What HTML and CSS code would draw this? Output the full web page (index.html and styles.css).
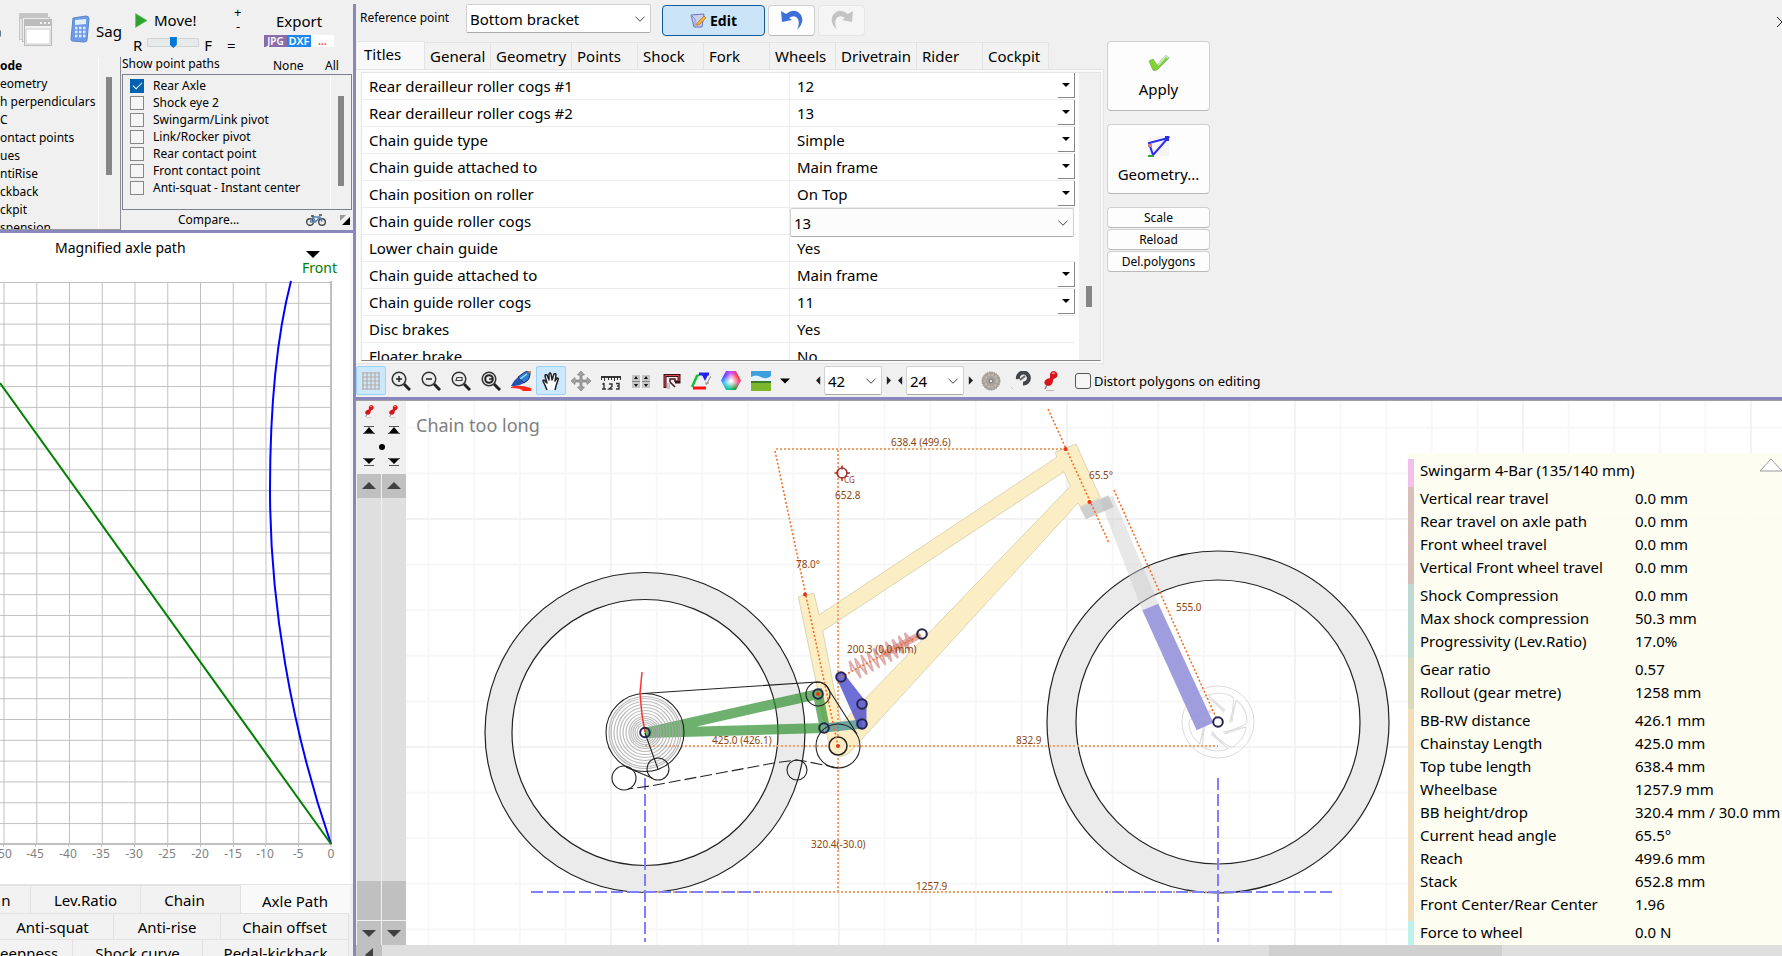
FILE: index.html
```html
<!DOCTYPE html>
<html lang="en">
<head>
<meta charset="utf-8">
<title>Bike suspension editor</title>
<link rel="stylesheet" href="styles.css">
</head>
<body>
<svg class="defs" aria-hidden="true">
  <defs>
    <symbol id="tri-down" viewBox="0 0 8 8"><path d="M0 2H8L4 6Z" fill="#000"/></symbol>
    <symbol id="tri-left" viewBox="0 0 6 10"><path d="M5 0V10L0 5Z" fill="#222"/></symbol>
    <symbol id="tri-right" viewBox="0 0 6 10"><path d="M1 0V10L6 5Z" fill="#222"/></symbol>
    <symbol id="chev" viewBox="0 0 10 6"><path d="M.5 .8L5 5.2L9.500 .8" fill="none" stroke="#444"/></symbol>
    <symbol id="pin" viewBox="0 0 20 20"><path d="M5 19.500H13" stroke="#bbb"/><path d="M7 12L4 18" stroke="#888" stroke-width="1.500"/><path d="M9 3Q10 0 13 0Q17 1 16.500 5Q15 8 12.500 8L11.500 12Q10 16 6 14.500Q2 13 4 9.500Q6 7 9 7Z" fill="#d8141c"/><path d="M11 2.500Q12 1.500 14 2.500" stroke="#f88" stroke-width="1.500" fill="none"/></symbol>
    <symbol id="lens" viewBox="0 0 20 20"><path d="M13 13L19 19" stroke="#222" stroke-width="3"/><circle cx="8" cy="8" r="6.800" fill="#ececec" stroke="#333" stroke-width="1.500"/></symbol>
    <symbol id="to-top" viewBox="0 0 12 8"><path d="M1 .5H11M0 7.500H12" stroke="#555"/><path d="M1 7L6 1L11 7Z" fill="#000"/></symbol>
    <symbol id="to-bottom" viewBox="0 0 12 8"><path d="M1 7.500H11M0 .5H12" stroke="#555"/><path d="M1 1L6 6L11 1Z" fill="#000"/></symbol>
  </defs>
</svg>
<div class="app">
  <aside class="left">
    <div class="motion">
      <svg class="ico-win" viewBox="0 0 54 36"><path d="M0 18l1 1v5l-1 1Z" fill="#678"/><rect x="19.500" y="1.500" width="28" height="26" fill="#e4e4e4" stroke="#c8c8c8"/><path d="M20 2h27v5H20Z" fill="#c4c4c4"/><rect x="22.500" y="5.500" width="27" height="24" fill="#eee" stroke="#c4c4c4"/><rect x="24.500" y="7.500" width="27" height="26" fill="#f2f2f2" stroke="#bbb"/><path d="M25 8h26v6H25Z" fill="#bcbcbc"/><path d="M40 11h2M44 11h2M48 11h2" stroke="#f4f4f4" stroke-width="2"/><path d="M26 17h24v15H26Z" fill="#fff" stroke="#ccc"/></svg>
      <button class="sag" type="button"><svg viewBox="0 0 20 28" width="20" height="28"><path d="M3 3L16 1Q19 1 19 4L17 25Q17 27 14 27L2 26Q1 26 1 24Z" fill="#6f9be6" stroke="#5b86c8"/><path d="M5 5L16 4L16 9L5 10Z" fill="#dff0ff"/><path d="M5 13h2.500m1.500 0h2.500m1.500 0h2.500M5 17h2.500m1.500 0h2.500m1.500 0h2.500M5 21h2.500m1.500 0h2.500m1.500 0h2.500" stroke="#dceaff" stroke-width="2.500"/></svg><span>Sag</span></button>
      <div class="move">
        <button class="plain" type="button"><svg viewBox="0 0 12 15" width="12" height="15"><path d="M.5 .5L12 7.500L.5 14.500Z" fill="#2fa32f" stroke="#5cc05c" stroke-width=".6"/></svg><span>Move!</span></button>
        <div class="range"><label for="mv">R</label><input id="mv" type="range" min="0" max="100" value="50"><span>F</span></div>
      </div>
      <div class="steps"><button class="plain" type="button">+</button><button class="plain" type="button">-</button><button class="plain eq" type="button">=</button></div>
      <div class="export"><span>Export</span><div class="formats"><button type="button" class="jpg">JPG</button><button type="button" class="dxf">DXF</button><button type="button" class="etc">...</button></div></div>
    </div>
    <div class="options">
      <div class="modes">
        <ul>
          <li class="b">ode</li><li>eometry</li><li>h perpendiculars</li><li>C</li><li>ontact points</li><li>ues</li><li>ntiRise</li><li>ckback</li><li>ckpit</li><li>spension</li>
        </ul>
        <div class="thin-scroll"><i></i></div>
      </div>
      <div class="paths">
        <div class="paths-head"><span>Show point paths</span><button class="plain none" type="button">None</button><button class="plain" type="button">All</button></div>
        <div class="listbox">
          <div class="checks">
            <label><input type="checkbox" checked>Rear Axle</label>
            <label><input type="checkbox">Shock eye 2</label>
            <label><input type="checkbox">Swingarm/Link pivot</label>
            <label><input type="checkbox">Link/Rocker pivot</label>
            <label><input type="checkbox">Rear contact point</label>
            <label><input type="checkbox">Front contact point</label>
            <label><input type="checkbox">Anti-squat - Instant center</label>
          </div>
          <div class="thin-scroll list"><i></i></div>
        </div>
        <div class="paths-foot"><button class="plain" type="button">Compare...</button>
          <svg class="bike" viewBox="0 0 20 12"><g fill="none" stroke="#444" stroke-width="1.400"><circle cx="4" cy="8" r="3.300"/><circle cx="16" cy="8" r="3.300"/><path d="M4 8L7 3L14 3L16 8M7 3L9.500 8L14 3M4 8H9.500" stroke="#5b83b8"/><path d="M5 2h3M13 1h3"/></g></svg>
          <svg class="corner" viewBox="0 0 10 10"><path d="M0 0H6L0 6Z" fill="#999"/><path d="M10 2V10H2Z" fill="#000"/></svg></div>
      </div>
    </div>
    <div class="chart">
      <svg viewBox="0 233 350 651" preserveAspectRatio="xMaxYMin meet">
        <defs><pattern id="cg" x="331" y="282" width="32.750" height="20.810" patternUnits="userSpaceOnUse"><path d="M.5 0V20.810M0 .5H32.750" stroke="#c0c0c0" fill="none"/></pattern></defs>
        <rect x="0" y="282" width="331" height="562" fill="url(#cg)"/>
        <path d="M331 281V845M0 844H331" stroke="#c0c0c0" stroke-width="2"/>
        <path d="M3.500 844v3M35.500 844v3M68.500 844v3M101.500 844v3M134.500 844v3M167.500 844v3M200.500 844v3M233.500 844v3M265.500 844v3M298.500 844v3M331 844v3" stroke="#c0c0c0"/>
        <path d="M291 281C277 335 270 410 270 490C270 600 290 725 331 844" fill="none" stroke="#00f" stroke-width="2"/>
        <path d="M0 383L331 844" stroke="#008000" stroke-width="2"/>
        <path d="M306 251H320L313 258Z" fill="#000"/>
        <text class="c-title" x="55" y="253">Magnified axle path</text>
        <text class="c-front" x="302" y="273">Front</text>
        <g class="c-axis"><text x="3" y="858">-50</text><text x="35" y="858">-45</text><text x="68" y="858">-40</text><text x="101" y="858">-35</text><text x="134" y="858">-30</text><text x="167" y="858">-25</text><text x="200" y="858">-20</text><text x="233" y="858">-15</text><text x="265" y="858">-10</text><text x="298" y="858">-5</text><text x="331" y="858">0</text></g>
      </svg>
    </div>
    <div class="ctabs" role="tablist">
      <div class="crow r1"><button role="tab">n</button><button role="tab">Lev.Ratio</button><button role="tab">Chain</button><button role="tab" class="on" aria-selected="true">Axle Path</button></div>
      <div class="crow r2"><button role="tab">Anti-squat</button><button role="tab">Anti-rise</button><button role="tab">Chain offset</button></div>
      <div class="crow r3"><button role="tab">eepness</button><button role="tab">Shock curve</button><button role="tab">Pedal-kickback</button></div>
    </div>
  </aside>
  <div class="vsplit"></div>
  <main class="right">
    <section class="editor">
      <div class="editor-main">
        <div class="refrow">
          <label for="ref">Reference point</label>
          <span class="combo ref"><select id="ref"><option>Bottom bracket</option></select><svg><use href="#chev"/></svg></span>
          <button class="edit" type="button"><svg viewBox="0 0 17 15" width="17" height="15"><path d="M1 2L14 1L12 14L4 14Z" fill="#c9cff0" stroke="#6a72b8"/><path d="M1 2L5 6L5 13" fill="none" stroke="#8a90cc"/><path d="M7 10L14 3L16 5L9 12L6 12Z" fill="#f4b43c" stroke="#a87420" stroke-width=".7"/></svg>Edit</button>
          <button class="ur" type="button" aria-label="Undo"><svg viewBox="0 0 22 21"><path d="M0 1L1 12L11 10L8 8Q14 4 17 9Q19 14 16 20Q24 12 20 5Q14 -3 5 4Z" fill="#3c6fd8"/></svg></button>
          <button class="ur off" type="button" aria-label="Redo" disabled><svg viewBox="0 0 22 21"><path d="M22 1L21 12L11 10L14 8Q8 4 5 9Q3 14 6 20Q-2 12 2 5Q8 -3 17 4Z" fill="#c4c4c4"/></svg></button>
        </div>
        <div class="tabs" role="tablist">
          <button role="tab" class="on" aria-selected="true">Titles</button><button role="tab">General</button><button role="tab" class="w">Geometry</button><button role="tab">Points</button><button role="tab">Shock</button><button role="tab">Fork</button><button role="tab">Wheels</button><button role="tab" class="w">Drivetrain</button><button role="tab">Rider</button><button role="tab">Cockpit</button>
        </div>
        <div class="sheet">
          <div class="sheet-in">
            <table>
              <colgroup><col class="k"><col></colgroup>
              <tr><th scope="row"><label for="p1">Rear derailleur roller cogs #1</label></th><td><span class="cell"><select id="p1"><option>12</option></select><i><svg><use href="#tri-down"/></svg></i></span></td></tr>
              <tr><th scope="row"><label for="p2">Rear derailleur roller cogs #2</label></th><td><span class="cell"><select id="p2"><option>13</option></select><i><svg><use href="#tri-down"/></svg></i></span></td></tr>
              <tr><th scope="row"><label for="p3">Chain guide type</label></th><td><span class="cell"><select id="p3"><option>Simple</option></select><i><svg><use href="#tri-down"/></svg></i></span></td></tr>
              <tr><th scope="row"><label for="p4">Chain guide attached to</label></th><td><span class="cell"><select id="p4"><option>Main frame</option></select><i><svg><use href="#tri-down"/></svg></i></span></td></tr>
              <tr><th scope="row"><label for="p5">Chain position on roller</label></th><td><span class="cell"><select id="p5"><option>On Top</option></select><i><svg><use href="#tri-down"/></svg></i></span></td></tr>
              <tr><th scope="row"><label for="p6">Chain guide roller cogs</label></th><td><span class="combo active"><select id="p6"><option>13</option></select><svg><use href="#chev"/></svg></span></td></tr>
              <tr><th scope="row">Lower chain guide</th><td class="t">Yes</td></tr>
              <tr><th scope="row"><label for="p8">Chain guide attached to</label></th><td><span class="cell"><select id="p8"><option>Main frame</option></select><i><svg><use href="#tri-down"/></svg></i></span></td></tr>
              <tr><th scope="row"><label for="p9">Chain guide roller cogs</label></th><td><span class="cell"><select id="p9"><option>11</option></select><i><svg><use href="#tri-down"/></svg></i></span></td></tr>
              <tr><th scope="row">Disc brakes</th><td class="t">Yes</td></tr>
              <tr><th scope="row">Floater brake</th><td class="t">No</td></tr>
            </table>
            <div class="sheet-scroll"><i></i></div>
          </div>
        </div>
      </div>
      <div class="actions">
        <button class="big" type="button"><svg viewBox="0 0 22 18" width="22" height="18"><path d="M1 7L5 5L9 11L18 1L21 4L10 15Q7 18 5 16Z" fill="#7fd62a" stroke="#7aa86a" stroke-width=".8"/><path d="M10 11L18 2L20 4" fill="none" stroke="#c8e6c0" stroke-width="2"/></svg>Apply</button>
        <button class="big" type="button"><svg viewBox="0 0 22 22" width="22" height="22"><path d="M1 1H21V21H1Z" fill="#f6f4f4"/><path d="M1 8L20 3L5 20Z" fill="none" stroke="#2c2cf0" stroke-width="2"/><path d="M17 1h4v5h-4Z" fill="#2c2ce0"/><path d="M0 9v3h4v-3Z" fill="#c88"/><path d="M0 21h6" stroke="#3a3" stroke-width="2"/></svg>Geometry...</button>
        <button class="small" type="button">Scale</button>
        <button class="small" type="button">Reload</button>
        <button class="small" type="button">Del.polygons</button>
      </div>
      <svg class="close" viewBox="0 0 5 12"><path d="M10 1L0 11M0 1L10 11" stroke="#222" fill="none"/></svg>
    </section>
    <div class="toolbar">
      <button class="tb on" aria-label="Grid"><svg viewBox="0 0 20 20"><path d="M2 1V19M6 1V19M10 1V19M14 1V19M18 1V19M1 2H19M1 6H19M1 10H19M1 14H19M1 18H19" stroke="#b6aca6" stroke-width="1.200"/></svg></button>
      <button class="tb" aria-label="Zoom in"><svg viewBox="0 0 20 20"><use href="#lens"/><path d="M5 8h6M8 5v6" stroke="#222" stroke-width="1.500"/></svg></button>
      <button class="tb" aria-label="Zoom out"><svg viewBox="0 0 20 20"><use href="#lens"/><path d="M5 8h6" stroke="#222" stroke-width="1.500"/></svg></button>
      <button class="tb" aria-label="Zoom window"><svg viewBox="0 0 20 20"><use href="#lens"/><path d="M5 9.500L6 6.500H11V9.500Z" fill="none" stroke="#444" stroke-width="1.200"/></svg></button>
      <button class="tb" aria-label="Zoom all"><svg viewBox="0 0 20 20"><use href="#lens"/><circle cx="8" cy="8" r="3.800" fill="none" stroke="#222" stroke-width="2"/><path d="M8 8h4" stroke="#222" stroke-width="1.500"/></svg></button>
      <button class="tb" aria-label="Brush"><svg viewBox="0 0 20 20"><path d="M0 15Q3 9 7 6L13 12Q7 16 0 15Z" fill="#2454b0"/><path d="M7 6L14 1Q19 -1 19 4Q19 9 13 12Z" fill="#2f7fd4" stroke="#1a2a60"/><path d="M9 8L16 3" stroke="#9fe0ff" stroke-width="1.500"/><path d="M16 0L20 0L20 3Z" fill="#c84"/><path d="M0 16Q8 13 20 17V20H12Q10 17 0 17Z" fill="#ff2a1a"/></svg></button>
      <button class="tb on" aria-label="Pan"><svg viewBox="0 0 20 20"><path d="M6 19L3 12Q1 9 3 9L6 12L4 5Q4 3 6 4L8 9L8 3Q9 1 10 3L11 9L13 3Q15 2 15 4L14 10L16 7Q18 7 17 9L15 15L14 19" fill="#fff" stroke="#222" stroke-width="1.500" stroke-linejoin="round"/></svg></button>
      <button class="tb" aria-label="Move"><svg viewBox="0 0 20 20"><path d="M10 0L13.500 4H11V9H16V6.500L20 10L16 13.500V11H11V16H13.500L10 20L6.500 16H9V11H4V13.500L0 10L4 6.500V9H9V4H6.500Z" fill="#a4a4a4" stroke="#777" stroke-width=".7"/></svg></button>
      <button class="tb" aria-label="Ruler"><svg viewBox="0 0 20 20"><path d="M0 5h20v4h-1V7h-2v2h-1V7h-2v3h-1V7h-2v2h-1V7H8v2H7V7H4v3H3V7H1v2H0Z" fill="#333"/><path d="M3 12v6M1 18h4M1.500 13.500L3 12M8 13h3v2.500L8 18h3.500M15 12.500h3v2.500h-2M18 15v3h-3" fill="none" stroke="#333" stroke-width="1.400"/></svg></button>
      <button class="tb" aria-label="Fields"><svg viewBox="0 0 20 20"><path d="M1 4h8v13H1ZM11 4h8v13h-8Z" fill="#c6c6c6"/><path d="M1 10.500h8M11 10.500h8" stroke="#888"/><path d="M3 8L5 5L7 8ZM3 13L5 16L7 13ZM13 8L15 5L17 8ZM13 13L15 16L17 13Z" fill="#111"/></svg></button>
      <button class="tb" aria-label="Outline"><svg viewBox="0 0 20 20"><path d="M4 17V4.500H18V11H14" fill="none" stroke="#401018" stroke-width="3"/><path d="M4 16V4.500H18V10" fill="none" stroke="#e04a50" stroke-width="1"/><path d="M9 11V8H14V11M9 11L14 16" fill="none" stroke="#501018" stroke-width="1.500"/><path d="M6 12h3v6H6Z" fill="#c4c4c4"/></svg></button>
      <button class="tb" aria-label="Polygon"><svg viewBox="0 0 20 20"><path d="M1 16L6 5L8 4" fill="none" stroke="#10c030" stroke-width="2.500"/><path d="M8 3H18" stroke="#22e" stroke-width="3"/><path d="M11 4H17L14 10Z" fill="#22e"/><path d="M2 17H15" stroke="#f11" stroke-width="3"/><path d="M15 14L20 5M14 12h4" stroke="#888"/></svg></button>
      <button class="tb" aria-label="Colours"><span class="wheel"></span></button>
      <button class="tb" aria-label="Background picture"><svg viewBox="0 0 20 20"><path d="M0 0H20V11H0Z" fill="#3f9fdc"/><path d="M0 6Q5 3 10 6T20 5V11H0Z" fill="#e4f3fb"/><path d="M0 10H20V13H0Z" fill="#3c7a2c"/><path d="M0 12H20V20H0Z" fill="#7db82c"/></svg></button>
      <button class="tb narrow" aria-label="Background options"><svg class="s8"><use href="#tri-down"/></svg></button>
      <button class="tb arr" aria-label="Previous chainring"><svg class="s6"><use href="#tri-left"/></svg></button>
      <span class="combo gear"><select aria-label="Chainring"><option>42</option></select><svg><use href="#chev"/></svg></span>
      <button class="tb arr" aria-label="Next chainring"><svg class="s6"><use href="#tri-right"/></svg></button>
      <button class="tb arr" aria-label="Previous cog"><svg class="s6"><use href="#tri-left"/></svg></button>
      <span class="combo gear"><select aria-label="Cog"><option>24</option></select><svg><use href="#chev"/></svg></span>
      <button class="tb arr" aria-label="Next cog"><svg class="s6"><use href="#tri-right"/></svg></button>
      <button class="tb" aria-label="Cassette"><svg viewBox="0 0 20 20"><circle cx="10" cy="10" r="9" fill="#aaa39a" stroke="#8d8880" stroke-dasharray="1.500 1"/><circle cx="10" cy="10" r="6" fill="none" stroke="#c0bab2" stroke-dasharray="2 1.500" stroke-width="2"/><circle cx="10" cy="10" r="2.500" fill="#888"/><circle cx="10" cy="10" r="1" fill="#fff"/></svg></button>
      <button class="tb" aria-label="Chain"><svg viewBox="0 0 20 20"><path d="M7 8A5.500 5.500 0 1 1 12 12.500" fill="none" stroke="#42464a" stroke-width="4"/><path d="M9 9l5-4" stroke="#666" stroke-width="2"/><path d="M0 16l3 3" stroke="#bbb" stroke-dasharray="1 1"/></svg></button>
      <button class="tb" aria-label="Pin view"><svg><use href="#pin"/></svg></button>
      <label class="distort"><input type="checkbox">Distort polygons on editing</label>
    </div>
    <section class="view">
      <div class="rails">
        <div class="rails-head">
          <svg><use href="#pin"/></svg><svg><use href="#pin"/></svg>
          <svg class="flat"><use href="#to-top"/></svg><svg class="flat"><use href="#to-top"/></svg>
          <b></b>
          <svg class="flat"><use href="#to-bottom"/></svg><svg class="flat"><use href="#to-bottom"/></svg>
        </div>
        <div class="rail-pair">
          <div class="rail"><button aria-label="Up"><svg viewBox="0 0 14 8"><path d="M0 7L7 0L14 7Z" fill="#404040"/></svg></button><span></span><i></i><button aria-label="Down"><svg viewBox="0 0 14 8"><path d="M0 1L7 8L14 1Z" fill="#404040"/></svg></button></div>
          <div class="rail"><button aria-label="Up"><svg viewBox="0 0 14 8"><path d="M0 7L7 0L14 7Z" fill="#404040"/></svg></button><span></span><i></i><button aria-label="Down"><svg viewBox="0 0 14 8"><path d="M0 1L7 8L14 1Z" fill="#404040"/></svg></button></div>
        </div>
      </div>
      <div class="stage">
        <svg class="scene" viewBox="406 401 1376 544" preserveAspectRatio="xMinYMin slice">
          <defs>
            <pattern id="minor" x="610" y="518" width="45.600" height="45.600" patternUnits="userSpaceOnUse"><path d="M1 0V45.600M0 1H45.600" stroke="#f7f7f7" stroke-width="2"/></pattern>
            <pattern id="major" x="610" y="518" width="228" height="228" patternUnits="userSpaceOnUse"><path d="M1 0V228M0 1H228" stroke="#f2f2f2" stroke-width="2"/></pattern>
            <g id="win"><path d="M5 10L28 5Q27 17 15 25Q12 26 9 23L-7 11M7 12L27 5"/></g>
          </defs>
          <rect x="406" y="400" width="1376" height="545" fill="url(#minor)"/>
          <rect x="406" y="400" width="1376" height="545" fill="url(#major)"/>
          <g fill="none">
            <circle cx="645" cy="732.500" r="146.500" stroke="#ebebeb" stroke-width="27"/>
            <circle cx="1218" cy="722" r="156.500" stroke="#ebebeb" stroke-width="29"/>
            <g stroke="#222" stroke-width="1.200"><circle cx="645" cy="732.500" r="160"/><circle cx="645" cy="732.500" r="133"/><circle cx="1218" cy="722" r="171"/><circle cx="1218" cy="722" r="142"/></g>
            <g stroke="#dcdcdc" transform="translate(1218 722)"><circle r="36"/><use href="#win"/><use href="#win" transform="rotate(60)"/><use href="#win" transform="rotate(120)"/><use href="#win" transform="rotate(180)"/><use href="#win" transform="rotate(240)"/><use href="#win" transform="rotate(300)"/></g>
          </g>
          <path d="M1100 500L1113 496L1158.300 603.700L1142.300 610.300Z" fill="#c8c8c8" fill-opacity=".42"/>
          <path d="M1079.700 507.300L1108.300 495.300L1113.700 507L1086 519.300Z" fill="#bbb" fill-opacity=".7"/>
          <path d="M1142.300 610.300L1158.300 603.700L1213.300 722.700L1196.700 730.300Z" fill="#9795da" fill-opacity=".92"/>
          <path fill-rule="evenodd" d="M798.300 596.700L814 593.300L819 615L1056.700 457.300L1055.300 452.300L1076 444L1100.300 497.700L1080 506.700L1078 503L851 751Q846 757 838 756Q830 755 829 744ZM822.700 631L841 724L1070.300 486.300L1064 471.700Z" fill="#fbeec5" stroke="#ddd5b4"/>
          <g stroke="#f4a26c" stroke-width="2" stroke-dasharray="2 2" fill="none"><path d="M645 746H1218M838 450V892M776 449H1065M645 892H1218"/></g>
          <g stroke="#8080ff" stroke-width="2" stroke-dasharray="12 4" fill="none"><path d="M531 892H760M1332 892H1105M645 778V942M1218 778V942"/></g>
          <g stroke="#2a8c2a" stroke-opacity=".68" stroke-width="10" fill="none"><path d="M824 728L645 733L818 694L824 724"/></g>
          <path d="M824 728L862 724" stroke="#3c8c90" stroke-opacity=".75" stroke-width="9"/>
          <path d="M841 677L862 704V724Z" fill="#4a4ace" stroke="#4a4ace" stroke-width="9" stroke-linejoin="round" opacity=".8"/>
          <g transform="translate(841 677) rotate(-28)" fill="none"><path d="M12 0L15 -10L17 10L21 -10L24 10L28 -10L31 10L35 -10L38 10L42 -10L45 10L49 -10L52 10L56 -10L59 10L63 -9L66 9L70 -9L73 9L77 -9L80 3" stroke="#d08a88" stroke-opacity=".7" stroke-width="2"/><path d="M48 0H90" stroke="#cc7a76" stroke-opacity=".6" stroke-width="7"/></g>
          <g fill="none" stroke="#aaa" stroke-opacity=".8" stroke-width="1.200"><circle cx="645" cy="732.500" r="8"/><circle cx="645" cy="732.500" r="10"/><circle cx="645" cy="732.500" r="12"/><circle cx="645" cy="732.500" r="14"/><circle cx="645" cy="732.500" r="16"/><circle cx="645" cy="732.500" r="19"/><circle cx="645" cy="732.500" r="22"/><circle cx="645" cy="732.500" r="25"/><circle cx="645" cy="732.500" r="28"/><circle cx="645" cy="732.500" r="31"/><circle cx="645" cy="732.500" r="34"/><circle cx="645" cy="732.500" r="36"/></g>
          <g fill="none" stroke="#222" stroke-width="1.100"><circle cx="645" cy="732.500" r="39"/><path d="M643 693.500L817 682Q825 682 829 690L857 734"/><circle cx="818" cy="694" r="12"/><circle cx="838" cy="746" r="22"/><circle cx="838" cy="746" r="9" fill="#fbeec5" stroke-width="1.500"/><circle cx="797" cy="770" r="10"/><circle cx="658" cy="769" r="11"/><circle cx="624" cy="778" r="12"/><path d="M645 733L658 769M626 767L652 778"/><path d="M838 768L804 761L796 760L774 763L650 786L628 789" stroke-dasharray="12 4"/></g>
          <g stroke="#f36a1c" stroke-width="1.500" stroke-dasharray="2 2"><path d="M775 451L838 746M1048 409L1109 543M1114 490L1218 722M841 677L922 634"/></g>
          <path d="M642 672L640 693L642 715L645 732" fill="none" stroke="#f33" stroke-width="1.500"/>
          <g stroke="#24244c" stroke-width="2" fill="none"><circle cx="645" cy="732.500" r="4.800"/><circle cx="818" cy="694" r="4.800"/><circle cx="824" cy="728" r="4.800"/><circle cx="862" cy="724" r="4.800"/><circle cx="862" cy="704" r="4.800"/><circle cx="841" cy="677" r="4.800"/><circle cx="922" cy="634" r="4.800"/><circle cx="1218" cy="722" r="4.800" fill="#fff"/></g>
          <g fill="#f03010"><circle cx="1065.500" cy="449" r="2"/><circle cx="1089.500" cy="502" r="2"/><circle cx="805" cy="594.500" r="2"/><circle cx="838" cy="746" r="2"/><circle cx="818" cy="694" r="2"/></g>
          <g fill="none" stroke="#a03030" stroke-width="1.500"><circle cx="842" cy="473" r="5"/><path d="M842 465.500v4M842 477v4M834.500 473h4M846 473h4"/></g>
          <g class="dims"><text x="891" y="446">638.4 (499.6)</text><text x="1089" y="479">65.5°</text><text x="835" y="499">652.8</text><text x="796" y="568">78.0°</text><text x="847" y="653">200.3 (0.0 mm)</text><text x="712" y="744">425.0 (426.1)</text><text x="1016" y="744">832.9</text><text x="1176" y="611">555.0</text><text x="811" y="848">320.4(-30.0)</text><text x="916" y="890">1257.9</text></g>
          <text class="cg" x="844" y="483">CG</text>
        </svg>
        <div class="warn">Chain too long</div>
        <div class="info">
          <svg class="fold" viewBox="0 0 24 14"><path d="M1 13L12 1L23 13Z" fill="#fff" stroke="#999"/></svg>
          <dl class="g1"><div><dt>Swingarm 4-Bar (135/140 mm)</dt></div></dl>
          <dl class="g2"><div><dt>Vertical rear travel</dt><dd>0.0 mm</dd></div><div><dt>Rear travel on axle path</dt><dd>0.0 mm</dd></div><div><dt>Front wheel travel</dt><dd>0.0 mm</dd></div><div><dt>Vertical Front wheel travel</dt><dd>0.0 mm</dd></div></dl>
          <dl class="g3"><div><dt>Shock Compression</dt><dd>0.0 mm</dd></div><div><dt>Max shock compression</dt><dd>50.3 mm</dd></div><div><dt>Progressivity (Lev.Ratio)</dt><dd>17.0%</dd></div></dl>
          <dl class="g4"><div><dt>Gear ratio</dt><dd>0.57</dd></div><div><dt>Rollout (gear metre)</dt><dd>1258 mm</dd></div></dl>
          <dl class="g5"><div><dt>BB-RW distance</dt><dd>426.1 mm</dd></div><div><dt>Chainstay Length</dt><dd>425.0 mm</dd></div><div><dt>Top tube length</dt><dd>638.4 mm</dd></div><div><dt>Wheelbase</dt><dd>1257.9 mm</dd></div><div><dt>BB height/drop</dt><dd>320.4 mm / 30.0 mm</dd></div><div><dt>Current head angle</dt><dd>65.5°</dd></div><div><dt>Reach</dt><dd>499.6 mm</dd></div><div><dt>Stack</dt><dd>652.8 mm</dd></div><div><dt>Front Center/Rear Center</dt><dd>1.96</dd></div></dl>
          <dl class="g6"><div><dt>Force to wheel</dt><dd>0.0 N</dd></div></dl>
        </div>
      </div>
    </section>
    <div class="hscroll"><button aria-label="Scroll left"><svg viewBox="0 0 8 14"><path d="M8 0V14L0 7Z" fill="#404040"/></svg></button><span></span><i></i><span class="after"></span></div>
  </main>
</div>
</body>
</html>
```
FILE: styles.css
```css
* { box-sizing: border-box; }
body { margin: 0; font-family: "Noto Sans", "Open Sans", sans-serif; font-size: 15px; line-height: 20px; color: #000; background: #f0f0f0; }
button, select, input { font: inherit; color: inherit; margin: 0; }
button { padding: 0; border: 0; background: none; white-space: nowrap; }
svg { display: block; flex: none; }
i, b { display: block; }
ul, dl, dd { margin: 0; padding: 0; list-style: none; }
.defs { position: absolute; width: 0; height: 0; }
.app { display: flex; height: 100vh; overflow: hidden; }
.left { flex: 0 0 353px; display: flex; flex-direction: column; min-height: 0; overflow: hidden; }
.vsplit { flex: 0 0 3px; margin-top: 4px; background: #8987bb; }
.right { flex: 1; min-width: 0; display: flex; flex-direction: column; }
.plain { display: flex; align-items: center; }

/* Motion controls */
.motion { display: flex; flex: 0 0 57px; min-height: 0; }
.ico-win { width: 54px; height: 36px; margin-top: 12px; }
.sag { display: flex; gap: 6px; height: 28px; margin: 15px 0 0 16px; width: 63px; align-items: center; }
.sag span { padding-top: 4px; }
.move { width: 88px; padding-top: 10px; }
.move .plain { gap: 7px; padding-left: 2px; }
.range { display: flex; align-items: center; gap: 5px; height: 30px; }
.range input { appearance: none; width: 52px; height: 9px; background: #e7eaea; border: 1px solid #d2d4d4; margin-top: -6px; }
.range input::-webkit-slider-thumb { appearance: none; width: 7px; height: 11px; background: #0078d7; clip-path: polygon(0 0, 100% 0, 100% 70%, 50% 100%, 0 70%); margin-top: 1px; }
.steps { display: flex; flex-direction: column; width: 36px; padding: 5px 0 0 12px; font-size: 13px; }
.steps .plain { height: 14px; padding-left: 1px; line-height: 14px; }
.steps .plain + .plain { padding-left: 3px; }
.steps .plain.eq { height: 24px; margin-left: -9px; font-size: 15px; }
.export { padding: 11px 0 0 7px; }
.export > span { padding-left: 12px; }
.formats { display: flex; margin-top: 4px; }
.formats button { width: 23px; height: 12px; line-height: 12px; font-size: 10px; font-weight: 600; color: #fff; }
.formats .jpg { background: #8a6cab; }
.formats .dxf { background: #1b86f0; width: 24px; font-size: 11px; }
.formats .etc { background: #fff; color: #e33; }

/* Option lists */
.options { display: flex; flex: 0 0 176px; min-height: 0; overflow: hidden; font-size: 12px; border-bottom: 3px solid #8987bb; }
.modes { display: flex; flex: 0 0 121px; border-right: 1px solid #8b8b93; border-bottom: 1px solid #999; overflow: hidden; }
.modes ul { width: 98px; line-height: 18px; white-space: nowrap; font-size: 12px; }
.modes .b { font-weight: 700; }
.thin-scroll { border-left: 1px solid #fff; padding: 20px 0 0 7px; }
.thin-scroll i { width: 6px; height: 98px; background: #868686; }
.paths { flex: 1; min-width: 0; padding-left: 1px; }
.paths-head { display: flex; height: 17px; align-items: center; line-height: 16px; }
.paths-head span { width: 151px; margin-top: -4px; }
.paths-head .none { width: 52px; }
.listbox { display: flex; height: 136px; border: 1px solid #7c808c; margin-right: 1px; }
.checks { width: 207px; padding: 2px 0 0 7px; }
.checks label { display: flex; align-items: center; gap: 9px; height: 17px; }
.checks input, .distort input { appearance: none; width: 14px; height: 14px; border: 1px solid #888; background: #f5f5f5; }
.checks input:checked { border-color: #0063b1; background: #0063b1; display: grid; place-items: center; }
.checks input:checked::after { content: ""; width: 8px; height: 4px; border: solid #fff; border-width: 0 0 1px 1px; rotate: -45deg; translate: 0 -1px; }
.thin-scroll.list { padding-top: 21px; }
.thin-scroll.list i { height: 90px; }
.paths-foot { display: flex; align-items: center; height: 20px; padding-left: 56px; }
.paths-foot button { width: 128px; }
.bike { width: 20px; height: 12px; }
.corner { width: 10px; height: 10px; margin-left: 14px; }

/* Chart */
.chart { flex: 1; min-height: 0; background: #fff; border: solid #f8f8f8; border-width: 0 3px 0 0; }
.chart svg { width: 100%; height: 100%; }
.c-title { font-size: 14px; }
.c-front { font-size: 14px; fill: #008000; }
.c-axis { font-size: 12px; fill: #808080; text-anchor: middle; }
.ctabs { flex: 0 0 72px; min-height: 0; overflow: hidden; background: #f0f0f0; font-size: 15px; border-top: 1px solid #e4e4e4; }
.crow { display: grid; height: 26px; margin-right: 4px; }
.crow.r1 { height: 28px; margin-right: 3px; }
.r1 { grid-template-columns: 31px 110px 100px 1fr; }
.r2 { grid-template-columns: 114px 107px 1fr; }
.r3 { grid-template-columns: 73px 130px 1fr; }
.crow button { background: #f2f2f2; border: solid #e2e2e2; border-width: 1px 1px 0 0; text-align: center; }
.r1 button:first-child { padding-right: 18px; }
.r1 button:nth-child(3) { padding-right: 12px; }
.r2 button:first-child { padding-right: 8px; }
.r3 button:first-child { padding-right: 20px; }
.crow .on { background: #f9f9f9; border-color: #f9f9f9; padding-top: 2px; }

/* Editor */
.editor { display: flex; flex: 0 0 364px; min-height: 0; position: relative; }
.editor-main { flex: 0 0 748px; display: flex; flex-direction: column; }
.refrow { display: flex; height: 41px; padding: 4px 0 0 4px; font-size: 13px; }
.refrow label { width: 106px; padding-top: 4px; font-size: 12px; }
.combo { display: grid; align-items: center; height: 29px; border: 1px solid #d0d0d0; border-bottom-color: #aaa; border-radius: 2px; background: #fff; }
.combo > * { grid-area: 1 / 1; }
.combo select { appearance: none; border: 0; background: none; width: 100%; height: 100%; padding: 0 0 0 3px; font-size: 15px; }
.combo svg { width: 10px; height: 6px; justify-self: end; margin-right: 5px; pointer-events: none; }
.combo.ref { width: 185px; }
.combo.active { height: 29px; margin: 0 0 -3px 0; width: 284px; position: relative; background: #fcfcfc; }
.edit { display: flex; align-items: center; justify-content: center; gap: 3px; width: 103px; height: 31px; margin: 1px 3px 0 11px; border: 1px solid #0a5a9c; border-radius: 4px; background: #cce4f7; font-weight: 700; font-size: 14px; }
.ur { display: grid; place-items: center; width: 47px; height: 31px; margin: 1px 3px 0 0; border: 1px solid #d0d0d0; border-bottom-color: #bbb; border-radius: 4px; background: #fdfdfd; }
.ur svg { width: 22px; height: 21px; }
.ur.off { background: #f5f5f5; border-color: #e6e6e6; }
.tabs { display: flex; align-items: flex-end; height: 28px; padding-left: 1px; }
.tabs button { width: 66px; height: 27px; padding-left: 5px; text-align: left; background: #f2f2f2; border: solid #e4e4e4; border-width: 1px 1px 0 0; }
.tabs .w { width: 81px; }
.tabs .on { height: 28px; width: 68px; background: #f9f9f9; padding: 0 0 4px 7px; }
.sheet { flex: 1; background: #f9f9f9; padding: 2px 2px 2px 5px; border: 1px solid #e4e4e4; border-left: 0; min-height: 0; }
.sheet-in { display: flex; height: 289px; overflow: hidden; border: 1px solid #e4e4e4; border-bottom-color: #888; background: #fff; }
table { width: 713px; border-collapse: separate; border-spacing: 0; table-layout: fixed; align-self: flex-start; }
.k { width: 428px; }
th, td { padding: 0; height: 27px; border-bottom: 1px solid #ececec; text-align: left; font-weight: 400; vertical-align: top; line-height: 26px; }
th { padding-left: 7px; border-right: 1px solid #ececec; }
.t { padding-left: 7px; }
.cell { display: grid; height: 26px; }
.cell > * { grid-area: 1 / 1; }
.cell select { appearance: none; border: 0; background: none; width: 100%; padding: 0 0 0 7px; }
.cell i { justify-self: end; width: 17px; height: 25px; border: solid #888; border-width: 0 1px 1px 0; display: grid; place-items: center; pointer-events: none; }
.cell i svg { width: 8px; height: 8px; }
.sheet-scroll { flex: 1; margin-left: 4px; background: #f0f0f0; padding: 213px 0 0 7px; }
.sheet-scroll i { width: 6px; height: 21px; background: #868686; }
.actions { display: flex; flex-direction: column; width: 106px; padding: 41px 0 0 3px; }
.actions button { border: 1px solid #d0d0d0; border-bottom-color: #b8b8b8; border-radius: 4px; background: #fdfdfd; }
.big { display: flex; flex-direction: column; align-items: center; justify-content: center; gap: 7px; height: 70px; margin-bottom: 13px; }
.small { height: 21px; margin-bottom: 1px; line-height: 18px; font-size: 12px; }
.close { width: 5px; height: 12px; position: absolute; right: 0; top: 16px; }

/* Drawing toolbar */
.toolbar { display: flex; align-items: center; flex: 0 0 36px; min-height: 0; border-bottom: 3px solid #8987bb; }
.tb { display: grid; place-items: center; width: 30px; height: 29px; border: 1px solid transparent; border-radius: 2px; }
.tb svg { width: 20px; height: 20px; }
.tb svg.s8 { width: 10px; height: 10px; }
.tb svg.s6 { width: 5px; height: 9px; }
.tb.on { background: #cce8ff; border-color: #99d1ff; }
.tb.narrow { width: 17px; }
.tb.arr { width: 12px; }
.tb.narrow + .arr { margin-left: 19px; }
.gear { width: 58px; }
.wheel { width: 20px; height: 20px; clip-path: polygon(25% 3%, 75% 3%, 100% 50%, 75% 97%, 25% 97%, 0 50%); background: radial-gradient(#fff 5%, transparent 60%), conic-gradient(#d050ff, #f33, #f0408a, #20a040, #10c8a0, #2cb0ff, #5040ff, #d050ff); }
.distort { display: flex; align-items: center; gap: 3px; margin-left: 9px; font-size: 13px; white-space: nowrap; }
.distort input { width: 16px; height: 16px; border: 1px solid #555; border-radius: 3px; }

/* Drawing view */
.view { flex: 1; display: flex; min-height: 0; border-top: 1px solid #a0a0a0; }
.rails { flex: 0 0 50px; display: flex; flex-direction: column; padding-left: 1px; }
.rails-head { flex: 0 0 73px; display: grid; grid-template-columns: 1fr 1fr; grid-template-rows: 20px 18px 15px 16px; place-items: center; }
.rails-head svg { width: 13px; height: 13px; }
.rails-head svg.flat { width: 12px; height: 8px; }
.rails-head b { grid-column: span 2; width: 6px; height: 6px; border-radius: 3px; background: #000; }
.rail-pair { flex: 1; display: grid; grid-template-columns: 1fr 1fr; gap: 1px; min-height: 0; background: #f0f0f0; }
.rail { display: flex; flex-direction: column; background: #dfdfdf; }
.rail button { height: 24px; background: #c0c0c0; display: grid; place-items: center; }
.rail button svg { width: 14px; height: 8px; }
.rail span { flex: 1; }
.rail i { height: 40px; background: #c0c0c0; border-bottom: 1px solid #f0f0f0; }
.stage { flex: 1; min-width: 0; display: grid; position: relative; background: #fff; overflow: hidden; }
.scene { position: absolute; inset: 0; width: 100%; height: 100%; }
.dims { font-size: 10px; fill: #8b4513; }
.cg { font-size: 8px; fill: #a03030; }
.warn { position: absolute; left: 10px; top: 13px; font-size: 18px; line-height: 22px; color: #808080; }
.info { position: absolute; right: 0; top: 52px; bottom: 0; width: 374px; padding-top: 6px; overflow: hidden; background: #fdfdf0e6; }
.fold { position: absolute; right: -1px; top: 5px; width: 24px; height: 14px; }
dl { padding: 0 0 5px 6px; border-left: 6px solid; }
dl div { display: flex; line-height: 23px; white-space: nowrap; }
dt { width: 215px; }
.g1 dt { width: auto; }
.g1 { border-color: #f2c0ea; }
.g2 { border-color: #d9bfba; }
.g3 { border-color: #bfd9d3; }
.g4 { border-color: #d9d9ba; }
.g5 { border-color: #f2debb; }
.g6 { border-color: #bff2ea; }
.hscroll { flex: 0 0 11px; min-height: 0; display: flex; overflow: hidden; background: #dfdfdf; }
.hscroll button { width: 26px; height: 20px; background: #c0c0c0; display: grid; place-items: center; }
.hscroll svg { width: 8px; height: 14px; }
.hscroll span { flex: 887; }
.hscroll i { flex: 233; background: #d0d0d0; }
.hscroll .after { flex: 280; }
```
